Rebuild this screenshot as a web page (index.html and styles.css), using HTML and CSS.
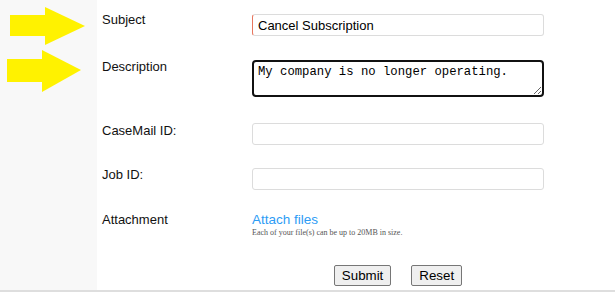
FILE: index.html
```html
<!DOCTYPE html>
<html lang="en">
<head>
    <meta charset="UTF-8">
    <title>Contact Support</title>
    <link rel="stylesheet" href="styles.css">
</head>
<body>
    <div class="page">
        <div class="sidebar">
            <svg class="arrows" width="97" height="100" viewBox="0 0 97 100">
                <rect x="10" y="15" width="36" height="21" fill="#fff200"/>
                <polygon points="45,7 85,26 45,45" fill="#fff200"/>
                <rect x="7" y="59" width="36" height="23" fill="#fff200"/>
                <polygon points="42,50 81,70 42,92" fill="#fff200"/>
            </svg>
        </div>

        <form class="main" onsubmit="return false;">
            <div class="row row-subject">
                <label for="subject">Subject</label>
                <input type="text" id="subject" class="field field-required" value="Cancel Subscription">
            </div>
            <div class="row row-desc">
                <label for="description">Description</label>
                <textarea id="description" class="field-area">My company is no longer operating.</textarea>
            </div>
            <div class="row row-casemail">
                <label for="casemail">CaseMail ID:</label>
                <input type="text" id="casemail" class="field">
            </div>
            <div class="row row-job">
                <label for="jobid">Job ID:</label>
                <input type="text" id="jobid" class="field">
            </div>
            <div class="row row-attach">
                <label>Attachment</label>
                <div>
                    <a href="#" class="attach-link">Attach files</a>
                    <div class="attach-note">Each of your file(s) can be up to 20MB in size.</div>
                </div>
            </div>
            <div class="row row-buttons">
                <span></span>
                <div class="buttons">
                    <button type="submit">Submit</button>
                    <button type="reset">Reset</button>
                </div>
            </div>
        </form>
    </div>
    <div class="footer"></div>
</body>
</html>
```

FILE: styles.css
```css
body {
    margin: 0;
    padding: 0;
    font-family: "Liberation Sans", Arial, sans-serif;
    font-size: 13px;
    color: #111;
    background: #fff;
}
.page {
    display: flex;
    height: 290px;
}
.sidebar {
    width: 97px;
    background-color: #f8f8f8;
}
.arrows {
    display: block;
}
.main {
    flex: 1;
    padding: 14px 0 0 5px;
    margin: 0;
}
.row {
    display: grid;
    grid-template-columns: 150px 292px;
    align-items: start;
}
.row label {
    line-height: 16px;
    margin-top: -1px;
}
.row-subject {
    margin-bottom: 24px;
}
.row-subject label {
    margin-top: -2px;
}
.row-desc {
    margin-bottom: 26px;
}
.row-casemail {
    margin-bottom: 23px;
}
.row-casemail label {
    margin-top: 0;
}
.row-job {
    margin-bottom: 22px;
}
.row-attach label {
    margin-top: 0;
}
.row-buttons {
    margin-top: 27px;
}
.field {
    box-sizing: border-box;
    width: 292px;
    height: 22px;
    border: 1px solid #dcdcdc;
    border-radius: 3px;
    padding: 0 5px;
    font-family: "Liberation Sans", Arial, sans-serif;
    font-size: 13px;
    color: #000;
    outline: none;
}
.field-required {
    border-left-color: #e8765e;
}
.field-area {
    box-sizing: border-box;
    width: 292px;
    height: 37px;
    border: 2px solid #111;
    border-radius: 4px;
    padding: 3px 4px;
    font-family: "Liberation Mono", "DejaVu Sans Mono", monospace;
    font-size: 12.25px;
    color: #000;
    outline: none;
    display: block;
}
.attach-link {
    display: block;
    color: #2d9cf5;
    text-decoration: none;
    font-size: 13.5px;
    line-height: 16px;
}
.attach-note {
    font-family: "Liberation Serif", "Times New Roman", serif;
    font-size: 8px;
    line-height: 10px;
    color: #555;
}
.buttons {
    display: flex;
    justify-content: center;
    gap: 20px;
}
button {
    font-family: "Liberation Sans", Arial, sans-serif;
    font-size: 13.33px;
    padding: 1px 7px;
    height: 21px;
    background-color: #efefef;
    border: 1px solid #767676;
    border-radius: 2px;
    color: #000;
}
.footer {
    border-top: 2px solid #dedede;
    height: 1px;
}
```
